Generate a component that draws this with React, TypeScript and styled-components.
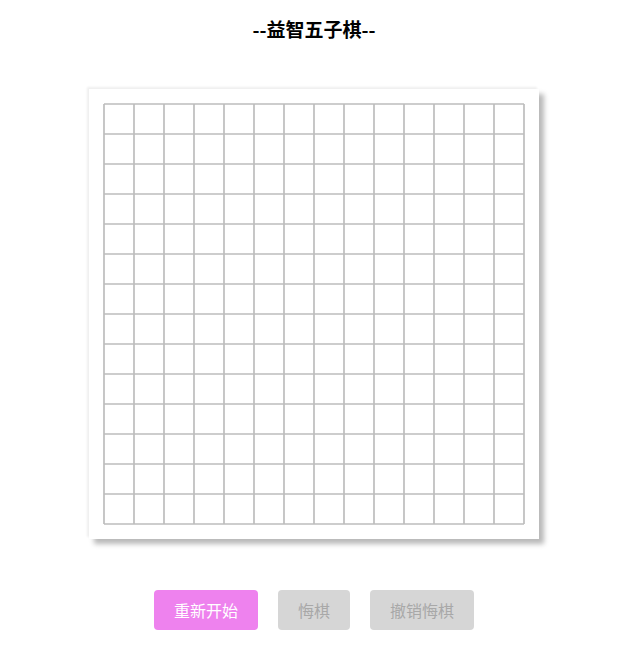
import React from "react";
import styled, { createGlobalStyle } from "styled-components";

const Global = createGlobalStyle`
  html, body { margin: 0; padding: 0; background: #fff; }
  body { font-family: "Noto Sans CJK SC", "Noto Sans", sans-serif; }
`;

const Page = styled.div`
  width: 628px;
  display: flex;
  flex-direction: column;
  align-items: center;
`;

const Title = styled.h3`
  margin: 18px 0 0;
  font-size: 19px;
  line-height: 21px;
  font-weight: 700;
  color: #000;
`;

const Board = styled.div`
  margin-top: 50px;
  width: 450px;
  height: 450px;
  background: #fff;
  box-shadow: -2px -2px 2px #efefef, 5px 5px 5px #b9b9b9;
  svg { display: block; }
`;

const Controls = styled.div`
  margin-top: 51px;
  display: flex;
  gap: 20px;
`;

const Btn = styled.button<{ $active?: boolean }>`
  height: 40px;
  padding: 0 20px;
  border: none;
  border-radius: 4px;
  font-family: "Noto Sans CJK SC", sans-serif;
  font-size: 16px;
  line-height: 40px;
  cursor: pointer;
  background: ${(p) => (p.$active ? "#ee82ee" : "#d6d6d6")};
  color: ${(p) => (p.$active ? "#fff" : "#a8a8a8")};
`;

const N = 15;
const lines = Array.from({ length: N }, (_, i) => 15 + i * 30);

export default function App() {
  return (
    <>
      <Global />
      <Page>
        <Title>--益智五子棋--</Title>
        <Board>
          <svg width="450" height="450" viewBox="0 0 450 450">
            <g stroke="#bdbdbd" strokeWidth="1.7">
              {lines.map((p) => (
                <line key={"v" + p} x1={p} y1={15} x2={p} y2={435} />
              ))}
              {lines.map((p) => (
                <line key={"h" + p} x1={15} y1={p} x2={435} y2={p} />
              ))}
            </g>
          </svg>
        </Board>
        <Controls>
          <Btn $active>重新开始</Btn>
          <Btn>悔棋</Btn>
          <Btn>撤销悔棋</Btn>
        </Controls>
      </Page>
    </>
  );
}
